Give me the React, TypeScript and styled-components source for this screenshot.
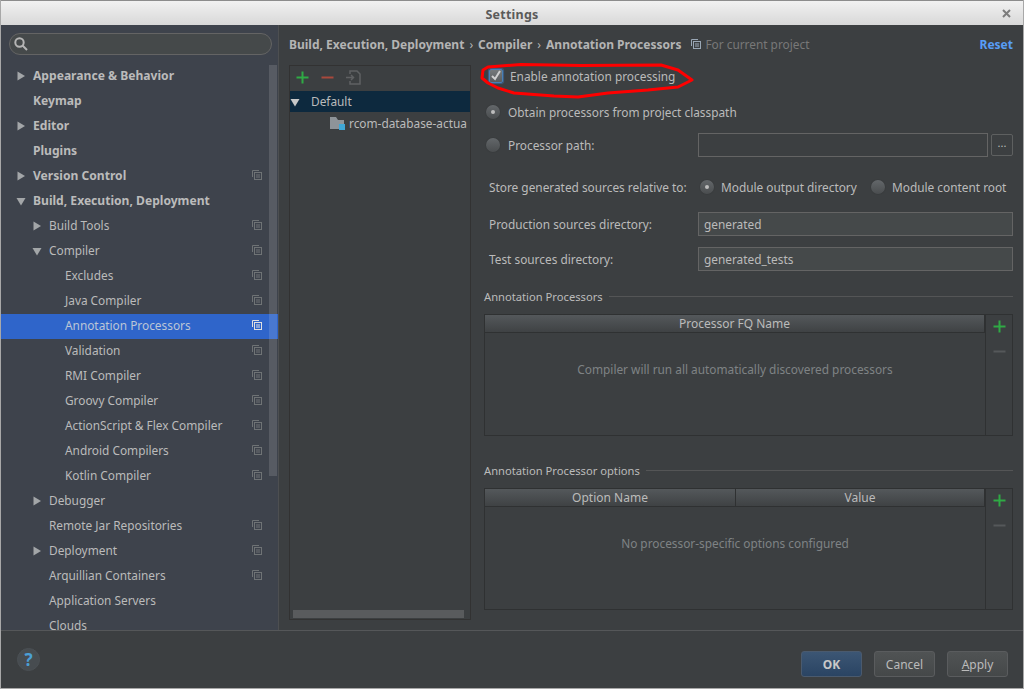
import React from "react";
import styled, { createGlobalStyle } from "styled-components";

const Global = createGlobalStyle`
  html, body { margin: 0; padding: 0; background: #3c3f41; }
  * { box-sizing: border-box; }
  body { font-family: "Noto Sans", "Open Sans", sans-serif; font-size: 11.85px; color: #bbbbbb; }
`;

const Window = styled.div`
  position: relative;
  width: 1024px;
  height: 689px;
  display: flex;
  flex-direction: column;
  background: #3c3f41;
  border-left: 1px solid #a8a8a8;
  border-right: 1px solid #a8a8a8;
  border-bottom: 1px solid #a8a8a8;
  overflow: hidden;
`;
const TitleBar = styled.div`
  position: relative;
  height: 25px;
  flex: none;
  display: flex;
  align-items: center;
  justify-content: center;
  padding-top: 2px;
  background: linear-gradient(#f1f1f1, #d8d8d8);
  border-top: 1px solid #8c8c8c;
  font-weight: 700;
  font-size: 12.5px;
  letter-spacing: 0.25px;
  color: #5a5a5a;
`;
const CloseButton = styled.svg`
  position: absolute;
  right: 12px;
  top: 8px;
`;
const Body = styled.div`
  flex: 1;
  min-height: 0;
  display: flex;
`;
const Sidebar = styled.div`
  width: 278px;
  flex: none;
  background: #3e434c;
  border-right: 1px solid #4d4f51;
  display: flex;
  flex-direction: column;
  overflow: hidden;
`;
const SearchWrap = styled.div`
  padding: 8px 6px 0 8px;
  flex: none;
  height: 38px;
`;
const SearchBox = styled.div`
  height: 22px;
  border-radius: 11px;
  border: 1px solid #646464;
  background: #45494a;
  display: flex;
  align-items: center;
  padding-left: 4px;
`;
const TreeArea = styled.div`
  position: relative;
  flex: 1;
  min-height: 0;
  padding-top: 1px;
`;
const Scrollbar = styled.div`
  position: absolute;
  right: 1px;
  top: 2px;
  width: 8px;
  height: 411px;
  background: rgba(255, 255, 255, 0.13);
`;
const Row = styled.div<{ $level: number; $selected?: boolean; $bold?: boolean }>`
  position: relative;
  height: 25px;
  display: flex;
  align-items: center;
  padding-left: ${(p) => 32 + p.$level * 16}px;
  padding-bottom: ${(p) => (p.$bold ? 2 : 4)}px;
  font-weight: ${(p) => (p.$bold ? 700 : 400)};
  font-size: ${(p) => (p.$bold ? "12.1px" : "11.85px")};
  color: ${(p) => (p.$selected ? "#bcc6d6" : "#bbbbbb")};
  background: ${(p) => (p.$selected ? "#2f65ca" : "transparent")};
`;
const ArrowSlot = styled.svg<{ $level: number }>`
  position: absolute;
  left: ${(p) => 15 + p.$level * 16}px;
  top: 7px;
`;
const ProfileArrow = styled.svg`
  position: absolute;
  left: 0;
  top: 31px;
`;
const RowIcon = styled.span`
  position: absolute;
  left: 251px;
  top: 6px;
  line-height: 0;
`;
const Content = styled.div`
  flex: 1;
  min-width: 0;
  display: flex;
  flex-direction: column;
  padding: 0 10px 0 10px;
`;
const Crumbs = styled.div`
  height: 40px;
  flex: none;
  display: flex;
  align-items: center;
  padding-bottom: 2px;
  font-weight: 700;
  font-size: 12px;
  color: #b4b4b4;
`;
const Sep = styled.span`
  font-weight: 400;
  margin: 0 5px;
`;
const ProjectNote = styled.span`
  font-weight: 400;
  font-size: 11.85px;
  color: #787878;
  margin-left: 10px;
  display: inline-flex;
  align-items: center;
  gap: 4px;
`;
const Reset = styled.span`
  margin-left: auto;
  color: #589df6;
`;
const Split = styled.div`
  flex: 1;
  min-height: 0;
  display: flex;
`;
const ProfilePanel = styled.div`
  width: 182px;
  height: 555px;
  flex: none;
  border: 1px solid #323232;
  display: flex;
  flex-direction: column;
  position: relative;
`;
const ProfileToolbar = styled.div`
  height: 25px;
  flex: none;
  display: flex;
  align-items: center;
  gap: 12px;
  padding: 0 0 2px 6px;
`;
const ProfileRow = styled.div<{ $selected?: boolean; $indent: number; $height: number }>`
  height: ${(p) => p.$height}px;
  display: flex;
  align-items: center;
  white-space: nowrap;
  overflow: hidden;
  padding-left: ${(p) => p.$indent}px;
  padding-bottom: ${(p) => (p.$selected ? 2 : 0)}px;
  background: ${(p) => (p.$selected ? "#0d293e" : "transparent")};
`;
const FolderIcon = styled.svg`
  margin-right: 3px;
  flex: none;
`;
const HScroll = styled.div`
  position: absolute;
  left: 3px;
  right: 6px;
  bottom: 1px;
  height: 8px;
  background: #595b5d;
`;
const Divider = styled.div`
  width: 13px;
  flex: none;
  display: flex;
  align-items: flex-start;
  justify-content: center;
  padding-top: 270px;
`;
const Dots = styled.div`
  width: 4px;
  height: 14px;
  background-image: radial-gradient(#a0a0a0 40%, transparent 50%);
  background-size: 2px 2px;
`;
const Form = styled.div`
  flex: 1;
  min-width: 0;
`;
const CheckRow = styled.div`
  height: 22px;
  display: flex;
  align-items: center;
  gap: 7px;
  padding-left: 5px;
`;
const CheckBox = styled.div`
  width: 14px;
  height: 14px;
  border-radius: 2px;
  border: 1px solid #4a7fb5;
  box-shadow: 0 0 1px 1px #3c5f85;
  background: linear-gradient(#75797b, #5a5d5f);
  display: flex;
  align-items: center;
  justify-content: center;
`;
const RadioRow = styled.div<{ $mt: number }>`
  height: 22px;
  display: flex;
  align-items: center;
  gap: 8px;
  margin-top: ${(p) => p.$mt}px;
  padding-left: 2px;
`;
const Radio = styled.div<{ $on?: boolean }>`
  width: 14px;
  height: 14px;
  flex: none;
  border-radius: 50%;
  background: linear-gradient(#63676a, #4a4d4f);
  box-shadow: 0 0 1px #2b2b2b;
  display: flex;
  align-items: center;
  justify-content: center;
  &::after {
    content: "";
    width: 4px;
    height: 4px;
    border-radius: 50%;
    background: ${(p) => (p.$on ? "#bdbdbd" : "transparent")};
  }
`;
const PathLabel = styled.span<{ $width: number }>`
  width: ${(p) => p.$width}px;
  flex: none;
`;
const FieldGroup = styled.div`
  flex: 1;
  min-width: 0;
  display: flex;
  align-items: center;
  gap: 3px;
`;
const Field = styled.div<{ $filled?: boolean }>`
  flex: 1;
  height: 24px;
  border: 1px solid #646464;
  background: ${(p) => (p.$filled ? "#45494a" : "transparent")};
  padding-left: 5px;
  display: flex;
  align-items: center;
`;
const BrowseButton = styled.div`
  width: 22px;
  height: 22px;
  flex: none;
  border: 1px solid #5e6060;
  border-radius: 2px;
  text-align: center;
  line-height: 16px;
  font-size: 11px;
`;
const StoreRow = styled.div`
  height: 22px;
  margin-top: 20px;
  padding-left: 5px;
  display: flex;
  align-items: center;
`;
const StoreLabel = styled.span`
  width: 211px;
  flex: none;
`;
const StoreOption = styled.span<{ $width: number }>`
  width: ${(p) => p.$width}px;
  flex: none;
  display: flex;
  align-items: center;
  gap: 7px;
`;
const DirRow = styled.div<{ $mt: number }>`
  height: 24px;
  margin-top: ${(p) => p.$mt}px;
  padding-left: 5px;
  display: flex;
  align-items: center;
`;
const SectionTitle = styled.div<{ $mt: number }>`
  height: 18px;
  margin-top: ${(p) => p.$mt}px;
  display: flex;
  align-items: center;
  gap: 6px;
  font-size: 11.2px;
  &::after {
    content: "";
    flex: 1;
    height: 1px;
    background: #545556;
  }
`;
const TableBox = styled.div`
  height: 122px;
  margin-top: 9px;
  border: 1px solid #2f3132;
  display: flex;
`;
const TableMain = styled.div`
  flex: 1;
  min-width: 0;
  display: flex;
  flex-direction: column;
  border-right: 1px solid #2f3132;
`;
const HeaderRow = styled.div`
  height: 18px;
  flex: none;
  display: flex;
  background: linear-gradient(#54585b, #3f4244);
  border-bottom: 1px solid #2f3132;
`;
const HeaderCell = styled.div<{ $width?: number }>`
  flex: ${(p) => (p.$width ? `0 0 ${p.$width}px` : 1)};
  display: flex;
  align-items: center;
  justify-content: center;
  border-right: 1px solid #2f3132;
  line-height: 1;
  font-size: 12px;
`;
const Empty = styled.div`
  flex: 1;
  text-align: center;
  color: #7f8385;
  padding-top: 28px;
`;
const SideTools = styled.div`
  width: 26px;
  flex: none;
  display: flex;
  flex-direction: column;
  align-items: center;
  gap: 12px;
  padding-top: 5px;
`;
const Footer = styled.div`
  height: 58px;
  flex: none;
  border-top: 1px solid #555759;
  display: flex;
  align-items: center;
  padding: 0 15px 0 16px;
`;
const Help = styled.div`
  width: 23px;
  height: 23px;
  border-radius: 50%;
  border: 1px solid #4b5054;
  background: #474c50;
  color: #4b9fd5;
  font-weight: 700;
  font-size: 17px;
  display: flex;
  align-items: center;
  justify-content: center;
`;
const Buttons = styled.div`
  margin: 9px 0 0 auto;
  display: flex;
  gap: 12px;
`;
const Btn = styled.div<{ $primary?: boolean }>`
  width: 61px;
  height: 26px;
  border-radius: 3px;
  border: 1px solid ${(p) => (p.$primary ? "#4a5a6e" : "#5a5c5e")};
  background: ${(p) =>
    p.$primary ? "linear-gradient(#3c5674, #2a4463)" : "linear-gradient(#505354, #454849)"};
  color: ${(p) => (p.$primary ? "#c8c8c8" : "#bbbbbb")};
  font-weight: ${(p) => (p.$primary ? 700 : 400)};
  font-size: 12px;
  display: flex;
  align-items: center;
  justify-content: center;
`;
const Mnemonic = styled.span`
  text-decoration: underline;
`;
const Highlight = styled.svg`
  position: absolute;
  left: 477px;
  top: 62px;
  pointer-events: none;
`;

const CopyIcon = ({ color = "#6f7375" }: { color?: string }) => (
  <svg width="10" height="10" viewBox="0 0 10 10" fill="none" stroke={color} strokeWidth="1">
    <path d="M0.5 7V0.5H7" />
    <rect x="2.5" y="2.5" width="7" height="7" />
    <path d="M4 5h4M4 7h4" />
  </svg>
);
const RowCopy = ({ color }: { color?: string }) => (
  <RowIcon>
    <CopyIcon color={color} />
  </RowIcon>
);
const Arrow = ({ level, open }: { level: number; open?: boolean }) => (
  <ArrowSlot $level={level} width="10" height="10" viewBox="0 0 10 10">
    <path d={open ? "M0.5 2h9L5 9.5z" : "M1.5 0.5L9 5l-7.5 4.5z"} fill="#a3a6a8" />
  </ArrowSlot>
);
const Plus = () => (
  <svg width="13" height="13" viewBox="0 0 13 13">
    <path d="M6.5 0.5v12M0.5 6.5h12" stroke="#2faa45" strokeWidth="2" />
  </svg>
);
const Minus = ({ color }: { color: string }) => (
  <svg width="13" height="13" viewBox="0 0 13 13">
    <path d="M0.5 6.5h12" stroke={color} strokeWidth="2" />
  </svg>
);

type Item = { label: string; level: number; bold?: boolean; arrow?: "open" | "closed"; copy?: boolean; selected?: boolean };
const items: Item[] = [
  { label: "Appearance & Behavior", level: 0, bold: true, arrow: "closed" },
  { label: "Keymap", level: 0, bold: true },
  { label: "Editor", level: 0, bold: true, arrow: "closed" },
  { label: "Plugins", level: 0, bold: true },
  { label: "Version Control", level: 0, bold: true, arrow: "closed", copy: true },
  { label: "Build, Execution, Deployment", level: 0, bold: true, arrow: "open" },
  { label: "Build Tools", level: 1, arrow: "closed", copy: true },
  { label: "Compiler", level: 1, arrow: "open", copy: true },
  { label: "Excludes", level: 2, copy: true },
  { label: "Java Compiler", level: 2, copy: true },
  { label: "Annotation Processors", level: 2, copy: true, selected: true },
  { label: "Validation", level: 2, copy: true },
  { label: "RMI Compiler", level: 2, copy: true },
  { label: "Groovy Compiler", level: 2, copy: true },
  { label: "ActionScript & Flex Compiler", level: 2, copy: true },
  { label: "Android Compilers", level: 2, copy: true },
  { label: "Kotlin Compiler", level: 2, copy: true },
  { label: "Debugger", level: 1, arrow: "closed" },
  { label: "Remote Jar Repositories", level: 1, copy: true },
  { label: "Deployment", level: 1, arrow: "closed", copy: true },
  { label: "Arquillian Containers", level: 1, copy: true },
  { label: "Application Servers", level: 1 },
  { label: "Clouds", level: 1 },
];

export default function App() {
  return (
    <Window>
      <Global />
      <TitleBar>
        Settings
        <CloseButton width="9" height="9" viewBox="0 0 9 9">
          <path d="M1 1l7 7M8 1l-7 7" stroke="#7c7c7c" strokeWidth="2" />
        </CloseButton>
      </TitleBar>
      <Body>
        <Sidebar>
          <SearchWrap>
            <SearchBox>
              <svg width="14" height="14" viewBox="0 0 14 14" fill="none" stroke="#b5b5b5" strokeWidth="2">
                <circle cx="5.5" cy="5.5" r="4.2" />
                <path d="M8.5 8.5l4.5 4.5" />
              </svg>
            </SearchBox>
          </SearchWrap>
          <TreeArea>
            {items.map((it) => (
              <Row key={it.label} $level={it.level} $bold={it.bold} $selected={it.selected}>
                {it.arrow && <Arrow level={it.level} open={it.arrow === "open"} />}
                {it.label}
                {it.copy && <RowCopy color={it.selected ? "#e0e0e0" : undefined} />}
              </Row>
            ))}
            <Scrollbar />
          </TreeArea>
        </Sidebar>
        <Content>
          <Crumbs>
            Build, Execution, Deployment<Sep>›</Sep>Compiler<Sep>›</Sep>Annotation Processors
            <ProjectNote>
              <CopyIcon color="#9aa7b5" />
              For current project
            </ProjectNote>
            <Reset>Reset</Reset>
          </Crumbs>
          <Split>
            <ProfilePanel>
              <ProfileToolbar>
                <Plus />
                <Minus color="#a8493c" />
                <svg width="15" height="15" viewBox="0 0 15 15" fill="none" stroke="#5f6163" strokeWidth="1.5">
                  <path d="M4 4V1h7l3 3v10H4v-3" />
                  <path d="M0 7.5h7M5 5l2.5 2.5L5 10" />
                </svg>
              </ProfileToolbar>
              <ProfileRow $selected $indent={21} $height={21}>
                <ProfileArrow width="10" height="10" viewBox="0 0 10 10">
                  <path d="M0.5 2h9L5 9.5z" fill="#c8c8c8" />
                </ProfileArrow>
                Default
              </ProfileRow>
              <ProfileRow $indent={40} $height={22}>
                <FolderIcon width="16" height="14" viewBox="0 0 16 14">
                  <path d="M0 1h6l2 3h6v9H0z" fill="#8e9499" />
                  <rect x="9" y="8" width="6" height="6" fill="#3fa7d6" />
                </FolderIcon>
                rcom-database-actua
              </ProfileRow>
              <HScroll />
            </ProfilePanel>
            <Divider>
              <Dots />
            </Divider>
            <Form>
              <CheckRow>
                <CheckBox>
                  <svg width="12" height="12" viewBox="0 0 12 12" fill="none" stroke="#d0d0d0" strokeWidth="2">
                    <path d="M2 6l3 3 5-8" />
                  </svg>
                </CheckBox>
                Enable annotation processing
              </CheckRow>
              <RadioRow $mt={14}>
                <Radio $on />
                Obtain processors from project classpath
              </RadioRow>
              <RadioRow $mt={11}>
                <Radio />
                <PathLabel $width={182}>Processor path:</PathLabel>
                <FieldGroup>
                  <Field />
                  <BrowseButton>...</BrowseButton>
                </FieldGroup>
              </RadioRow>
              <StoreRow>
                <StoreLabel>Store generated sources relative to:</StoreLabel>
                <StoreOption $width={171}>
                  <Radio $on />
                  Module output directory
                </StoreOption>
                <StoreOption $width={140}>
                  <Radio />
                  Module content root
                </StoreOption>
              </StoreRow>
              <DirRow $mt={14}>
                <PathLabel $width={209}>Production sources directory:</PathLabel>
                <Field $filled>generated</Field>
              </DirRow>
              <DirRow $mt={11}>
                <PathLabel $width={209}>Test sources directory:</PathLabel>
                <Field $filled>generated_tests</Field>
              </DirRow>
              <SectionTitle $mt={16}>Annotation Processors</SectionTitle>
              <TableBox>
                <TableMain>
                  <HeaderRow>
                    <HeaderCell>Processor FQ Name</HeaderCell>
                  </HeaderRow>
                  <Empty>Compiler will run all automatically discovered processors</Empty>
                </TableMain>
                <SideTools>
                  <Plus />
                  <Minus color="#55585a" />
                </SideTools>
              </TableBox>
              <SectionTitle $mt={25}>Annotation Processor options</SectionTitle>
              <TableBox>
                <TableMain>
                  <HeaderRow>
                    <HeaderCell $width={251}>Option Name</HeaderCell>
                    <HeaderCell>Value</HeaderCell>
                  </HeaderRow>
                  <Empty>No processor-specific options configured</Empty>
                </TableMain>
                <SideTools>
                  <Plus />
                  <Minus color="#55585a" />
                </SideTools>
              </TableBox>
            </Form>
          </Split>
        </Content>
      </Body>
      <Footer>
        <Help>?</Help>
        <Buttons>
          <Btn $primary>OK</Btn>
          <Btn>Cancel</Btn>
          <Btn>
            <span>
              <Mnemonic>A</Mnemonic>pply
            </span>
          </Btn>
        </Buttons>
      </Footer>
      <Highlight width="216" height="38" viewBox="0 0 216 38" fill="none">
        <path
          d="M4 16L5 8 10 5 43 2.5 103 3.5 183 3 200 8 214 18 200 25 170 28 130 31 100 35 76 34 36 31 20 26 10 21Z"
          stroke="#ff0000"
          strokeWidth="3"
          strokeLinejoin="round"
        />
      </Highlight>
    </Window>
  );
}
